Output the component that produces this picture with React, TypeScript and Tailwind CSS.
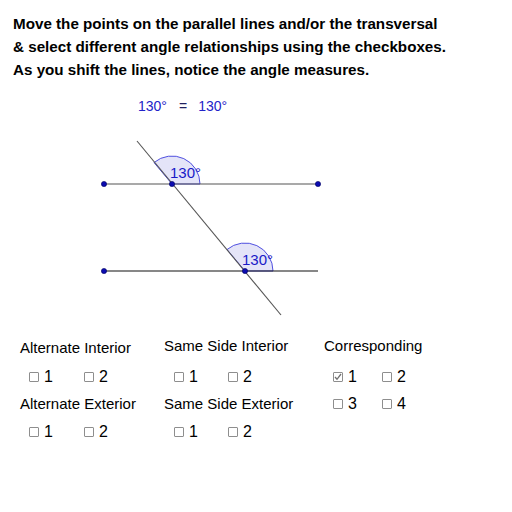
import React from "react";

function Box({ checked, label }: { checked?: boolean; label: string }) {
  return (
    <span className="flex items-center gap-[5px]">
      <span className="relative w-[10px] h-[10px] border border-[#8e8e8e] rounded-[1px] bg-white">
        {checked && (
          <svg className="absolute left-0 top-0" width="8" height="8" viewBox="0 0 8 8">
            <path d="M1 4 L3 6.3 L7 1" fill="none" stroke="#707070" strokeWidth="1.3" />
          </svg>
        )}
      </span>
      <span className="text-[16px] text-black leading-none">{label}</span>
    </span>
  );
}

function Pair({ a, b, gap, checkedA }: { a: string; b: string; gap: string; checkedA?: boolean }) {
  return (
    <div className={"flex pl-[9px] " + gap}>
      <Box label={a} checked={checkedA} />
      <Box label={b} />
    </div>
  );
}

export default function App() {
  const ang = (cx: number, cy: number) => {
    const r = 28;
    const a = (130 * Math.PI) / 180;
    const ex = cx + r * Math.cos(a);
    const ey = cy - r * Math.sin(a);
    return `M${cx} ${cy} L${cx + r} ${cy} A${r} ${r} 0 0 0 ${ex} ${ey} Z`;
  };
  return (
    <div className="w-[512px] h-[512px] bg-white relative overflow-hidden" style={{ fontFamily: '"Liberation Sans", Arial, sans-serif' }}>
      <div className="pt-[12px] pl-[13px] text-[15.2px] font-bold leading-[23px] text-black">
        <div>Move the points on the parallel lines and/or the transversal</div>
        <div>&amp; select different angle relationships using the checkboxes.</div>
        <div>As you shift the lines, notice the angle measures.</div>
      </div>
      <div className="mt-[16px] pl-[138px] flex text-[14px] leading-[18px] text-[#2323c8]">
        <span>130°</span>
        <span className="ml-[12px] text-[#202060]">=</span>
        <span className="ml-[11px]">130°</span>
      </div>
      <svg width="512" height="200" viewBox="0 130 512 200" className="block mt-[15px]">
        <path d={ang(172, 184)} fill="#e4e4f8" stroke="#5050e0" strokeWidth="1" />
        <path d={ang(245, 271)} fill="#e4e4f8" stroke="#5050e0" strokeWidth="1" />
        <line x1="104" y1="184" x2="318" y2="184" stroke="#555" strokeWidth="1.2" />
        <line x1="104" y1="271" x2="318" y2="271" stroke="#111" strokeWidth="1.2" />
        <line x1="137" y1="141" x2="281" y2="315" stroke="#555" strokeWidth="1.1" />
        <text x="170" y="178" fontSize="15" fill="#1a1ac8" fontFamily="Liberation Sans, Arial, sans-serif">130°</text>
        <text x="242" y="265" fontSize="15" fill="#1a1ac8" fontFamily="Liberation Sans, Arial, sans-serif">130°</text>
        {[
          [104, 184],
          [172, 184],
          [318, 184],
          [104, 271],
          [245, 271],
        ].map(([x, y], i) => (
          <circle key={i} cx={x} cy={y} r="2.6" fill="#0b0bb0" stroke="#000060" strokeWidth="0.6" />
        ))}
      </svg>
      <div className="absolute left-0 top-[332px] w-full text-[15px] text-black">
        <div className="flex h-[28px] items-center">
          <div className="w-[164px] pl-[20px] pt-[4px]">Alternate Interior</div>
          <div className="w-[160px]">Same Side Interior</div>
          <div>Corresponding</div>
        </div>
        <div className="flex h-[31px] items-center pt-[2px]">
          <div className="w-[164px] pl-[20px]"><Pair a="1" b="2" gap="gap-[31px]" /></div>
          <div className="w-[160px] pl-[1px]"><Pair a="1" b="2" gap="gap-[30px]" /></div>
          <div><Pair a="1" b="2" gap="gap-[25px]" checkedA /></div>
        </div>
        <div className="flex h-[26px] items-center">
          <div className="w-[164px] pl-[20px]">Alternate Exterior</div>
          <div className="w-[160px]">Same Side Exterior</div>
          <div><Pair a="3" b="4" gap="gap-[25px]" /></div>
        </div>
        <div className="flex h-[28px] items-center pt-[2px]">
          <div className="w-[164px] pl-[20px]"><Pair a="1" b="2" gap="gap-[31px]" /></div>
          <div className="w-[160px] pl-[1px]"><Pair a="1" b="2" gap="gap-[30px]" /></div>
        </div>
      </div>
    </div>
  );
}
